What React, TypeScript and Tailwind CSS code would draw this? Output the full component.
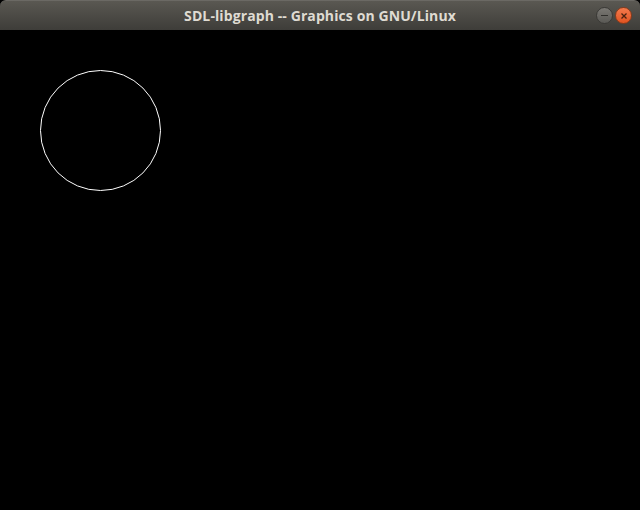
export default function App() {
  return (
    <div className="w-[640px] h-[510px] flex flex-col bg-black overflow-hidden">
      <div className="relative h-[30px] shrink-0 flex items-center justify-center rounded-t-[6px] bg-gradient-to-b from-[#5a5852] to-[#3e3d39] border-t border-[#6b6964]">
        <span className="text-[14px] font-bold text-[#dfdbd2] tracking-[0.1px]" style={{ fontFamily: '"Open Sans", "DejaVu Sans", sans-serif' }}>
          SDL-libgraph -- Graphics on GNU/Linux
        </span>
        <div className="absolute right-[8px] top-[6px] flex gap-[2px]">
          <div className="w-[17px] h-[17px] rounded-full bg-gradient-to-b from-[#7a7873] to-[#5a5955] border border-[#3a3936] flex items-center justify-center">
            <div className="w-[7px] h-[1.5px] bg-[#2f2e2b]" />
          </div>
          <div className="w-[17px] h-[17px] rounded-full bg-gradient-to-b from-[#f47a4c] to-[#e0531f] border border-[#8a3a1a] flex items-center justify-center">
            <svg width="8" height="8" viewBox="0 0 8 8">
              <path d="M1.5 1.5 L6.5 6.5 M6.5 1.5 L1.5 6.5" stroke="#4a2210" strokeWidth="1.3" />
            </svg>
          </div>
        </div>
      </div>
      <div className="flex-1 bg-black">
        <svg width="640" height="480" viewBox="0 0 640 480">
          <circle cx="100.5" cy="100.5" r="60" fill="none" stroke="white" strokeWidth="1" />
        </svg>
      </div>
    </div>
  );
}
